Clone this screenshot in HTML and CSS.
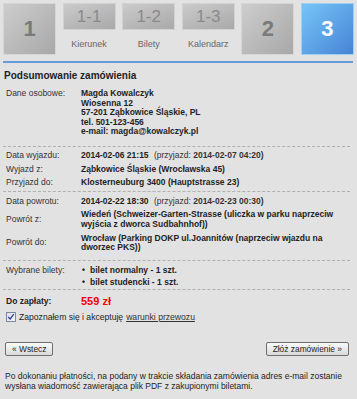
FILE: index.html
```html
<!DOCTYPE html>
<html lang="pl">
<head>
<meta charset="utf-8">
<title>Podsumowanie zamówienia</title>
<link rel="stylesheet" href="styles.css">
</head>
<body>
<div class="page">
  <nav class="steps">
    <div class="step step-big step-done">1</div>
    <div class="step-sub">
      <div class="step step-small">1-1</div>
      <div class="step-label">Kierunek</div>
    </div>
    <div class="step-sub">
      <div class="step step-small">1-2</div>
      <div class="step-label">Bilety</div>
    </div>
    <div class="step-sub">
      <div class="step step-small">1-3</div>
      <div class="step-label">Kalendarz</div>
    </div>
    <div class="step step-big step-done">2</div>
    <div class="step step-big step-active">3</div>
  </nav>
  <div class="rule"></div>

  <h1 class="title">Podsumowanie zamówienia</h1>

  <div class="section section-personal">
    <div class="row row-top">
      <div class="label">Dane osobowe:</div>
      <div class="value">Magda Kowalczyk<br>Wiosenna 12<br>57-201 Ząbkowice Śląskie, PL<br>tel. 501-123-456<br>e-mail: magda@kowalczyk.pl</div>
    </div>
  </div>

  <div class="section section-trip">
    <div class="row">
      <div class="label">Data wyjazdu:</div>
      <div class="value">2014-02-06 21:15 <span class="note">(przyjazd: <b>2014-02-07 04:20)</b></span></div>
    </div>
    <div class="row">
      <div class="label">Wyjazd z:</div>
      <div class="value">Ząbkowice Śląskie (Wrocławska 45)</div>
    </div>
    <div class="row">
      <div class="label">Przyjazd do:</div>
      <div class="value">Klosterneuburg 3400 (Hauptstrasse 23)</div>
    </div>
  </div>

  <div class="section section-return">
    <div class="row">
      <div class="label">Data powrotu:</div>
      <div class="value">2014-02-22 18:30 <span class="note">(przyjazd: <b>2014-02-23 00:30)</b></span></div>
    </div>
    <div class="row">
      <div class="label">Powrót z:</div>
      <div class="value">Wiedeń (Schweizer-Garten-Strasse (uliczka w parku naprzeciw wyjścia z dworca Sudbahnhof))</div>
    </div>
    <div class="row">
      <div class="label">Powrót do:</div>
      <div class="value">Wrocław (Parking DOKP ul.Joannitów (naprzeciw wjazdu na dworzec PKS))</div>
    </div>
  </div>

  <div class="section section-tickets">
    <div class="row row-list">
      <div class="label">Wybrane bilety:</div>
      <ul class="value tickets">
        <li>bilet normalny - 1 szt.</li>
        <li>bilet studencki - 1 szt.</li>
      </ul>
    </div>
  </div>

  <div class="section section-pay">
    <div class="row row-pay">
      <div class="label label-strong">Do zapłaty:</div>
      <div class="value price">559 zł</div>
    </div>
  </div>

  <label class="agree">
    <span class="checkbox"><svg viewBox="0 0 10 10" width="8" height="8"><path d="M1.5 5 L4 7.5 L8.5 1.5" fill="none" stroke="#2a3f96" stroke-width="1.6"/></svg></span>
    Zapoznałem się i akceptuję <a href="#" class="terms">warunki przewozu</a>
  </label>

  <div class="actions">
    <button class="btn" type="button">« Wstecz</button>
    <button class="btn" type="button">Złóż zamówienie »</button>
  </div>

  <p class="footer">Po dokonaniu płatności, na podany w trakcie składania zamówienia adres e-mail zostanie wysłana wiadomość zawierająca plik PDF z zakupionymi biletami.</p>
</div>
</body>
</html>
```

FILE: styles.css
```css
* { box-sizing: border-box; }

html, body {
  margin: 0;
  background: #e2e2e2;
}

body {
  font-family: "Liberation Sans", Arial, sans-serif;
  font-size: 8.5px;
  color: #222;
}

.page {
  padding: 3px 3px 0 3px;
}

/* steps */
.steps {
  display: flex;
  gap: 6.6px;
  height: 52px;
}

.step {
  display: flex;
  align-items: center;
  justify-content: center;
  width: 53px;
  border: 1px solid #d6d6d6;
  background: linear-gradient(135deg, #cdcdcd 0%, #a8a8a8 100%);
}

.step-big {
  height: 52px;
  font-size: 22px;
  font-weight: bold;
  color: #7a7a7a;
}

.step-active {
  border-color: #9ed0f4;
  background: linear-gradient(135deg, #76c5f6 0%, #4884d6 100%);
  color: #fff;
}

.step-sub {
  display: flex;
  flex-direction: column;
  align-items: center;
  width: 53px;
}

.step-small {
  height: 27px;
  font-size: 17px;
  color: #8a8a8a;
  border-color: #d2d2d2;
  background: linear-gradient(160deg, #cbcbcb 0%, #a9a9a9 100%);
}

.step-label {
  margin-top: 9px;
  font-size: 9px;
  line-height: 10px;
  color: #666;
}

.rule {
  margin-top: 6px;
  width: 350px;
  height: 2px;
  background: #6b9bd6;
}

/* summary */
.title {
  margin: 7px 0 0 1px;
  font-size: 10px;
  line-height: 12px;
  font-weight: bold;
  color: #222;
}

.section {
  width: 347px;
  padding-left: 3px;
  border-bottom: 1px dashed #b0b0b0;
}

.section-personal { padding-top: 5px; padding-bottom: 7px; }
.section-trip { padding-top: 2px; padding-bottom: 1px; }
.section-return { padding-top: 3px; padding-bottom: 5px; }
.section-tickets { padding-top: 3px; padding-bottom: 1px; }
.section-pay { padding-top: 5px; border-bottom: none; }

.row {
  display: grid;
  grid-template-columns: 75px 1fr;
  align-items: center;
  padding: 2px 0;
  line-height: 9.6px;
}

.row-top {
  align-items: start;
}

.row-list {
  align-items: start;
  padding: 0;
}

.row-list .label {
  line-height: 12px;
}

.label {
  color: #333;
}

.label-strong {
  font-weight: bold;
  color: #222;
}

.value {
  font-weight: bold;
  color: #222;
}

.note {
  margin-left: 3px;
  font-weight: normal;
  color: #333;
}

.tickets {
  margin: 0;
  padding: 0;
  list-style: none;
}

.tickets li {
  position: relative;
  padding-left: 9px;
  line-height: 12px;
}

.tickets li::before {
  content: "•";
  position: absolute;
  left: 1px;
  top: 0;
}

.row-pay {
  padding: 0;
  line-height: 12px;
}

.price {
  font-size: 11px;
  color: #f20000;
}

/* agreement */
.agree {
  display: flex;
  align-items: center;
  gap: 3px;
  margin: 4px 0 0 3px;
  line-height: 12px;
  font-size: 8.6px;
  color: #222;
}

.checkbox {
  display: flex;
  align-items: center;
  justify-content: center;
  width: 10px;
  height: 10px;
  border: 1px solid #7a8aa6;
  background: linear-gradient(135deg, #dcdcdc, #f8f8f8);
}

.terms {
  color: #333;
  text-decoration: underline;
}

/* actions */
.actions {
  display: flex;
  justify-content: space-between;
  margin: 19px 5px 0 2px;
}

.btn {
  height: 14px;
  padding: 0 6px;
  border: 1px solid #6f6f6f;
  border-radius: 2px;
  background: linear-gradient(#fafafa, #dadada);
  font-family: inherit;
  font-size: 8.4px;
  line-height: 12px;
  color: #222;
}

.footer {
  margin: 15px 0 0 2px;
  width: 346px;
  line-height: 10px;
  color: #222;
}
```
